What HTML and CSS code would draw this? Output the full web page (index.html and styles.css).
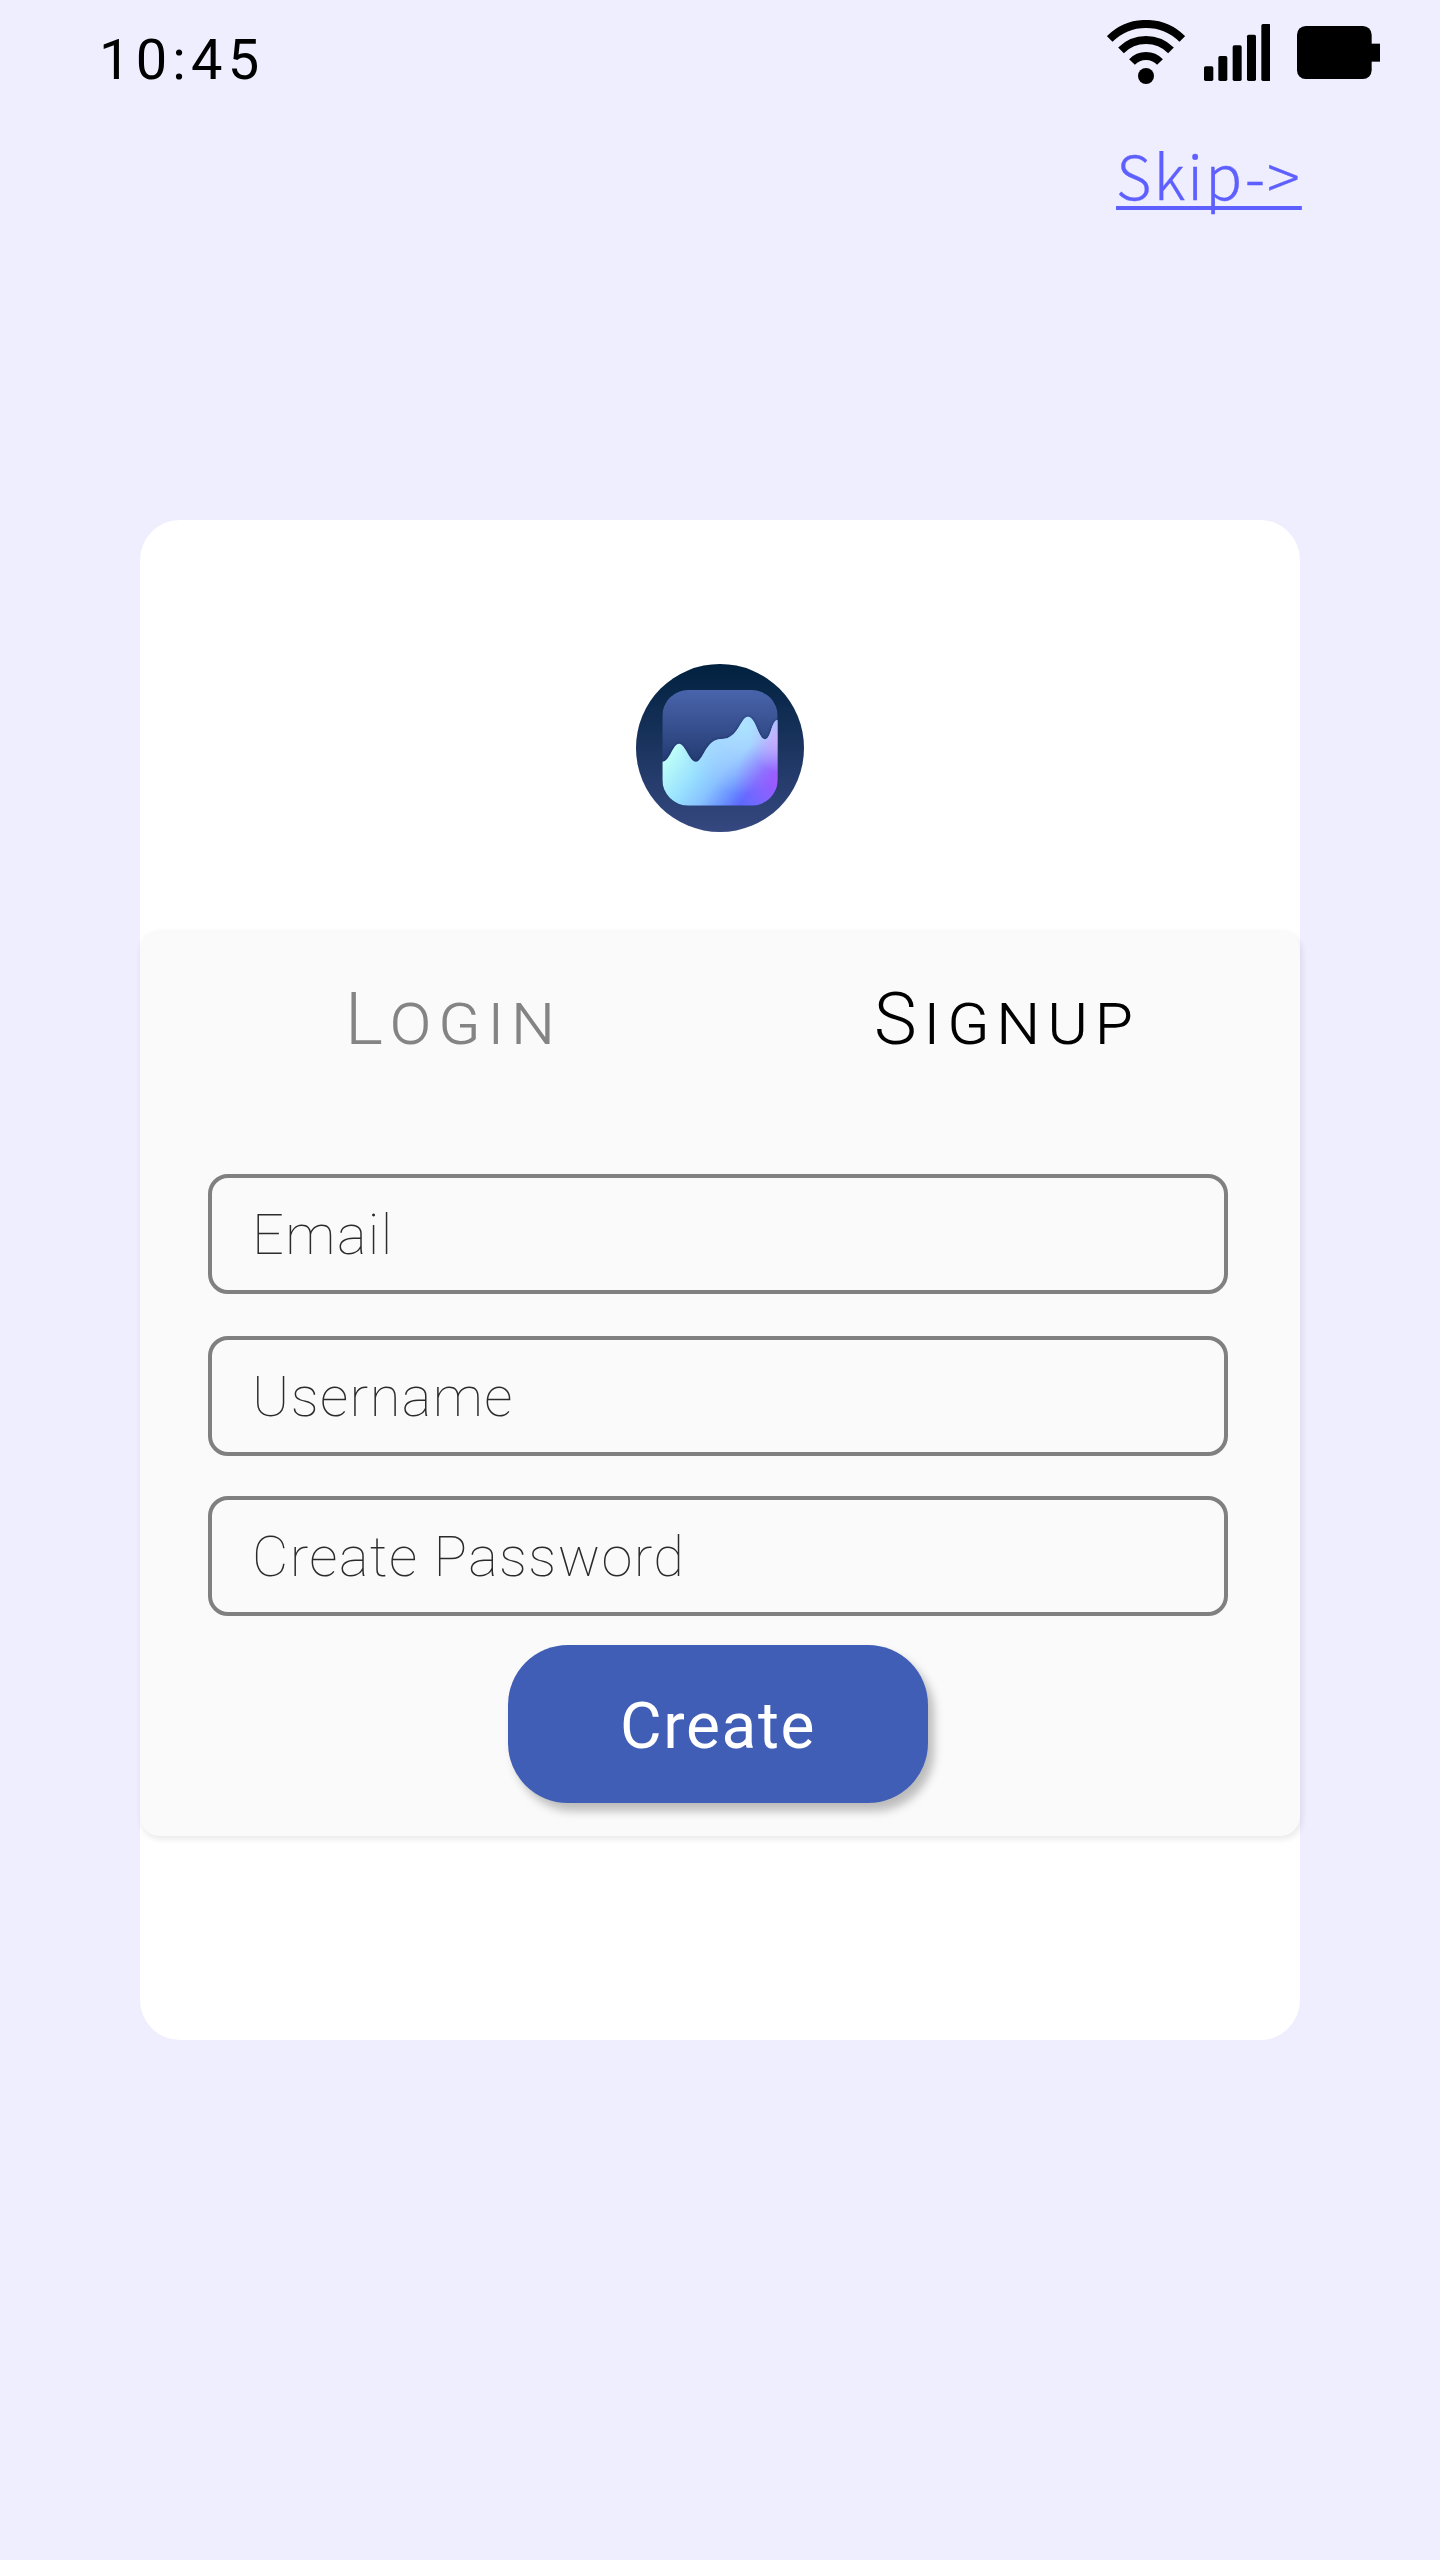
FILE: index.html
```
<!DOCTYPE html>
<html lang="en">
<head>
<meta charset="utf-8">
<title>Sign up</title>
<link rel="stylesheet" href="styles.css">
</head>
<body>
<div class="screen">
  <header class="status">
    <span class="time">10:45</span>
    <div class="status-icons">
      <svg class="wifi" viewBox="80 60 234 192" aria-hidden="true">
        <g fill="none" stroke="#000" stroke-width="24">
          <path d="M88 117A154 154 0 0 1 306 117"/>
          <path d="M122 151A106 106 0 0 1 272 151"/>
          <path d="M155 186A58 58 0 0 1 239 186"/>
        </g>
        <circle cx="197" cy="228" r="24"/>
      </svg>
      <svg class="signal" viewBox="371 72 200 171" aria-hidden="true">
        <rect x="371" y="199" width="28" height="44" rx="5"/>
        <rect x="414" y="168" width="27" height="75" rx="5"/>
        <rect x="457" y="136" width="27" height="107" rx="5"/>
        <rect x="500" y="104" width="27" height="139" rx="5"/>
        <rect x="543" y="72" width="28" height="171" rx="5"/>
      </svg>
      <svg class="battery" viewBox="651 78 249 159" aria-hidden="true">
        <rect x="651" y="78" width="224" height="159" rx="26"/>
        <rect x="870" y="131" width="30" height="54"/>
      </svg>
    </div>
  </header>
  <nav class="top-nav"><a class="skip">Skip-&gt;</a></nav>
  <main class="card">
    <div class="brand">
      <svg class="logo" viewBox="78 72 504 504" aria-hidden="true">
        <defs>
          <linearGradient id="disc" x1="0" y1="0" x2="0" y2="1"><stop offset="0" stop-color="#01213f"/><stop offset="1" stop-color="#354880"/></linearGradient>
          <linearGradient id="tile" x1="0" y1="0" x2="0" y2="1"><stop offset="0" stop-color="#4a64ac"/><stop offset=".65" stop-color="#223a70"/></linearGradient>
          <linearGradient id="area" gradientUnits="userSpaceOnUse" x1="175" y1="345" x2="385" y2="500"><stop offset="0" stop-color="#bffff8"/><stop offset=".4" stop-color="#96deff"/><stop offset=".62" stop-color="#88c2ff"/><stop offset=".8" stop-color="#6f9aff"/><stop offset="1" stop-color="#5c68ff"/></linearGradient>
          <radialGradient id="violet" gradientUnits="userSpaceOnUse" cx="525" cy="425" r="150"><stop offset="0" stop-color="#b056ff"/><stop offset=".3" stop-color="#a458ff" stop-opacity=".75"/><stop offset="1" stop-color="#a070ff" stop-opacity="0"/></radialGradient>
          <radialGradient id="haze" gradientUnits="userSpaceOnUse" cx="400" cy="250" r="210"><stop offset="0" stop-color="#aee4ff"/><stop offset=".35" stop-color="#a8d8ff" stop-opacity=".9"/><stop offset="1" stop-color="#a8c4ff" stop-opacity="0"/></radialGradient>
          <radialGradient id="blush" gradientUnits="userSpaceOnUse" cx="520" cy="300" r="100"><stop offset="0" stop-color="#d9aaff"/><stop offset="1" stop-color="#c8b8ff" stop-opacity="0"/></radialGradient>
          <clipPath id="round"><rect x="157" y="150" width="346" height="347" rx="78"/></clipPath>
          <filter id="soft" x="-10%" y="-10%" width="120%" height="120%"><feGaussianBlur stdDeviation="5"/></filter>
          <path id="wave" d="M157 365C179 365 188 311 207 311C226 311 238 365 258 365C280 365 286 297 335 297C385 297 392 230 414 230C437 230 446 298 465 298C484 298 484 240 503 240V497H157Z"/>
        </defs>
        <circle cx="330" cy="324" r="252" fill="url(#disc)"/>
        <g clip-path="url(#round)">
          <rect x="157" y="150" width="346" height="347" fill="url(#tile)"/>
          <use href="#wave" fill="#16285c" opacity=".7" filter="url(#soft)"/>
          <use href="#wave" fill="url(#area)"/>
          <use href="#wave" fill="url(#haze)"/>
          <use href="#wave" fill="url(#violet)"/>
          <use href="#wave" fill="url(#blush)"/>
        </g>
      </svg>
    </div>
    <section class="panel">
      <div class="tabs">
        <span class="tab">Login</span>
        <span class="tab active">Signup</span>
      </div>
      <form class="form">
        <div class="field">Email</div>
        <div class="field">Username</div>
        <div class="field">Create Password</div>
        <button class="create" type="button">Create</button>
      </form>
    </section>
  </main>
</div>
</body>
</html>
```
FILE: styles.css
```
* { box-sizing: border-box; }
body { margin: 0; background: #efeeff; font-family: Roboto, sans-serif; }
.screen { width: 1440px; height: 2560px; background: #efeeff; color: #000; }
.status { display: flex; justify-content: space-between; align-items: flex-start; height: 134px; padding: 20px 60px 0 99px; }
.time { padding-top: 7px; font-size: 56px; line-height: 66px; letter-spacing: 5.2px; }
.status-icons { display: flex; align-items: flex-start; }
.status-icons svg { display: block; }
.wifi { width: 78px; height: 64px; }
.signal { width: 66.67px; height: 57px; margin: 4px 26.67px 0 19px; }
.battery { width: 83px; height: 53px; margin-top: 6px; }
.top-nav { display: flex; height: 386px; padding-left: 1116px; }
.skip {
  font: 300 61px/80px "Noto Sans CJK SC", sans-serif;
  letter-spacing: 2.1px;
  color: #5d5fff;
  -webkit-text-stroke: .3px #5d5fff;
  height: 80px;
  text-decoration: underline;
  text-decoration-thickness: 4px;
  text-decoration-skip-ink: none;
  text-underline-offset: 6px;
}
.card { width: 1160px; height: 1520px; margin: 0 auto; background: #fff; border-radius: 40px; }
.brand { height: 410px; padding-top: 144px; display: flex; justify-content: center; }
.logo { width: 168px; height: 168px; display: block; }
.panel { height: 906px; padding-top: 47px; background: #fafafa; border-radius: 20px; box-shadow: 1.5px 3px 6px rgba(0, 0, 0, .09); }
.tabs { display: grid; grid-template-columns: 529px 1fr; padding-left: 205px; height: 197px; }
.tab { font-size: 72px; font-weight: 300; font-variant: small-caps; line-height: 85px; letter-spacing: 6.9px; color: #848484; }
.tab.active { color: #000; }
.form { display: flex; flex-direction: column; align-items: center; padding-right: 4px; }
.field {
  width: 1020px; height: 120px; padding-left: 40px;
  border: 4px solid #808080; border-radius: 20px;
  font-size: 56px; font-weight: 100; line-height: 114px; letter-spacing: .025em; color: #2b2b2b;
}
.field + .field { margin-top: 40px; }
.field:first-child { margin-bottom: 2px; }
.create {
  width: 420px; height: 158px; margin-top: 29px; padding: 5px 0 0;
  border: 0; border-radius: 60px; background: #405eb6; color: #fff;
  font: 400 64px/153px Roboto, sans-serif; letter-spacing: .025em;
  box-shadow: 6px 8px 10px rgba(0, 0, 0, .25);
}
```
